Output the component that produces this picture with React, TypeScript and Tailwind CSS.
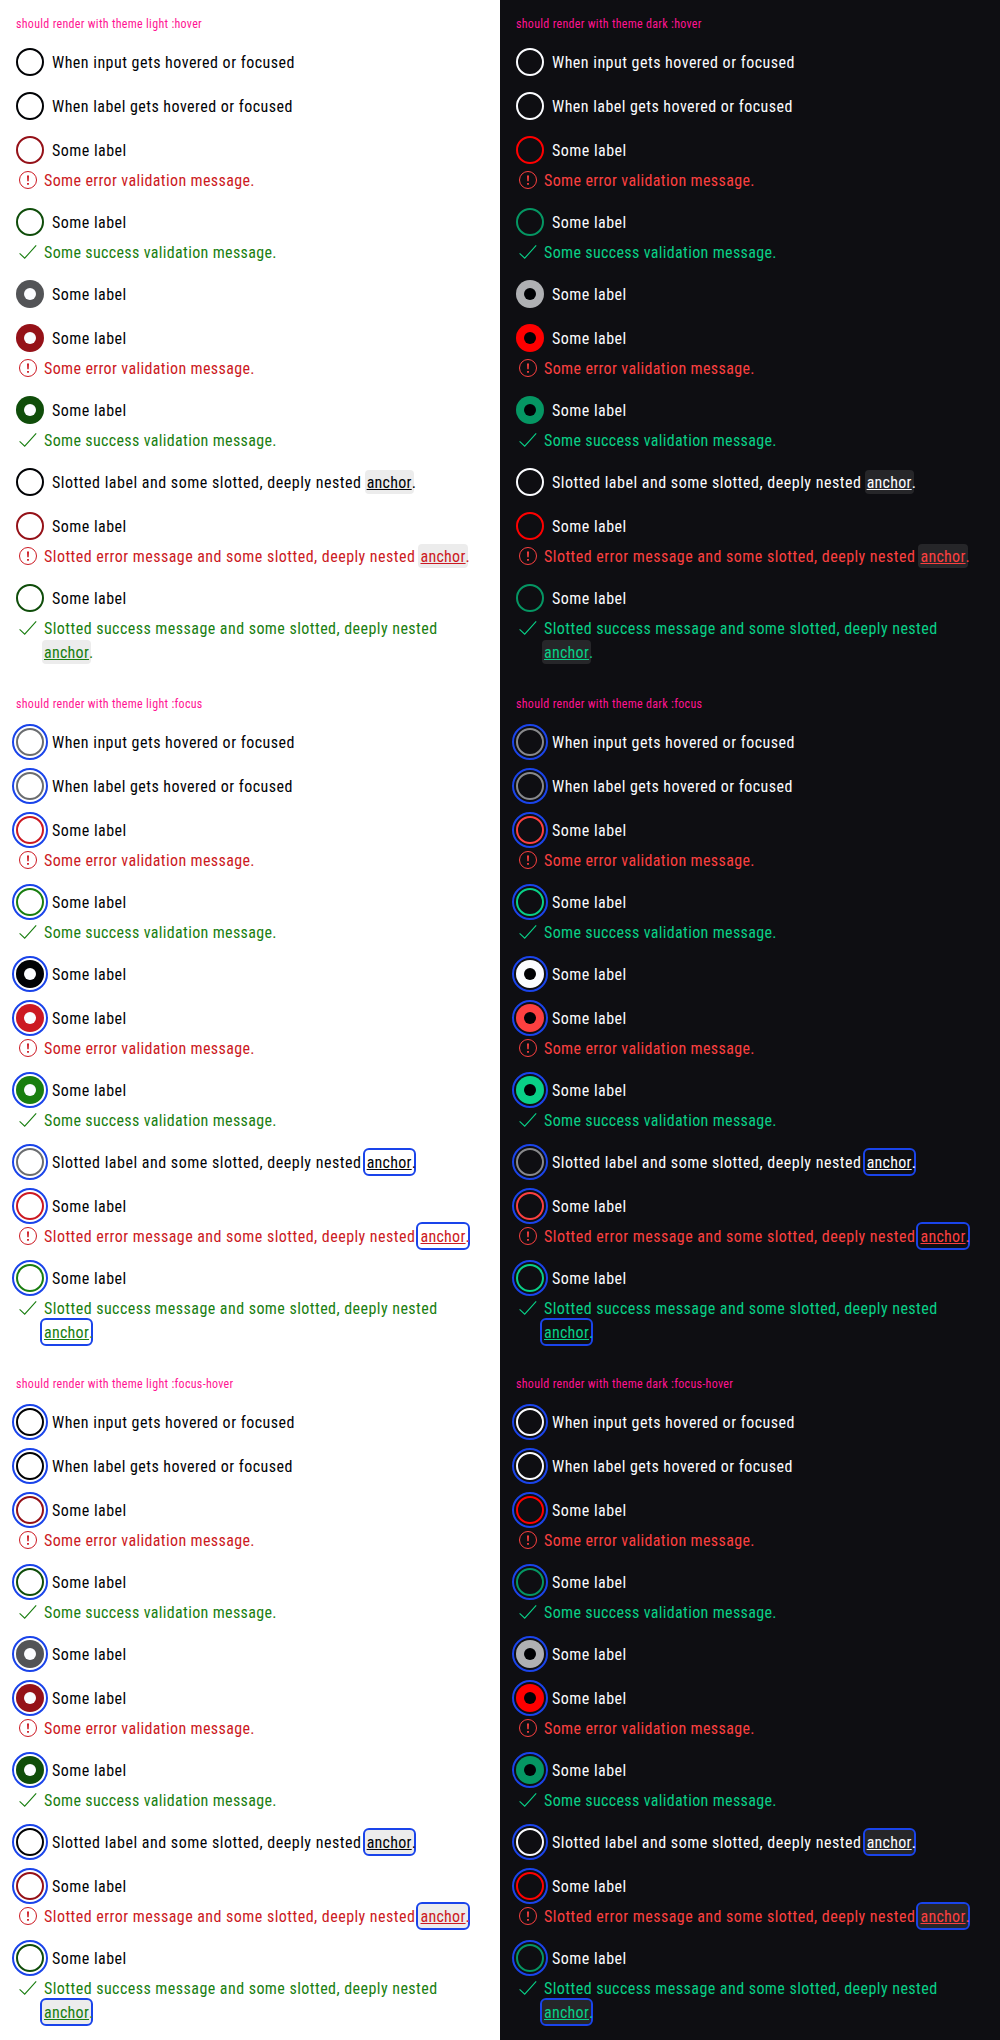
import React from 'react';

type Theme = 'light' | 'dark';
type Mode = 'hover' | 'focus' | 'focus-hover';
type State = 'none' | 'error' | 'success';

const FONT = "font-['Roboto',sans-serif] [font-stretch:85%]";

const palette = {
  light: {
    page: 'bg-white',
    text: 'text-[#010205]',
    dot: 'bg-[#fbfcff]',
    message: { none: '', error: 'text-[#cc1922]', success: 'text-[#197e10]' },
    border: {
      base: { none: 'border-[#6b6d70]', error: 'border-[#cc1922]', success: 'border-[#197e10]' },
      hover: { none: 'border-[#010205]', error: 'border-[#951118]', success: 'border-[#0f4d0a]' },
    },
    fill: {
      base: { none: 'bg-[#010205]', error: 'bg-[#cc1922]', success: 'bg-[#197e10]' },
      hover: { none: 'bg-[#535457]', error: 'bg-[#951118]', success: 'bg-[#0f4d0a]' },
    },
  },
  dark: {
    page: 'bg-[#0e0e12]',
    text: 'text-[#fbfcff]',
    dot: 'bg-[#010205]',
    message: { none: '', error: 'text-[#fc4040]', success: 'text-[#09d087]' },
    border: {
      base: { none: 'border-[#88898c]', error: 'border-[#fc4040]', success: 'border-[#09d087]' },
      hover: { none: 'border-[#fbfcff]', error: 'border-[#ff0000]', success: 'border-[#059663]' },
    },
    fill: {
      base: { none: 'bg-[#fbfcff]', error: 'bg-[#fc4040]', success: 'bg-[#09d087]' },
      hover: { none: 'bg-[#afb0b3]', error: 'bg-[#ff0000]', success: 'bg-[#059663]' },
    },
  },
};

function StateIcon({ state }: { state: State }) {
  return (
    <svg width="24" height="24" viewBox="0 0 24 24" fill="none" className="shrink-0">
      {state === 'error' ? (
        <>
          <circle cx="12" cy="12" r="8.5" stroke="currentColor" />
          <path d="M11 7.5h2l-.3 5.8h-1.4zM11.1 15h1.8v1.8h-1.8z" fill="currentColor" />
        </>
      ) : (
        <path d="M3.6 13.4 8.7 18.2 20.2 5.4" stroke="currentColor" strokeWidth="1.1" />
      )}
    </svg>
  );
}

function Anchor({ mode }: { mode: Mode }) {
  const hovered = mode !== 'focus' ? 'bg-[#949598]/[.18]' : '';
  const focused = mode !== 'hover' ? 'outline-2 outline-solid outline-[#1a44ea]' : '';
  return (
    <>
      <a
        className={`ml-[-1px] mr-[-2px] inline-block h-6 rounded-[4px] px-[2px] align-top tracking-[0.27px] underline decoration-1 underline-offset-1 ${hovered} ${focused}`}
      >
        anchor
      </a>
      .
    </>
  );
}

interface RadioProps {
  theme: Theme;
  mode: Mode;
  state?: State;
  checked?: boolean;
  label?: React.ReactNode;
  message?: React.ReactNode;
}

function Radio({ theme, mode, state = 'none', checked, label, message }: RadioProps) {
  const p = palette[theme];
  const kind = mode === 'focus' ? 'base' : 'hover';
  const ring = mode === 'hover' ? '' : 'outline-2 outline-offset-2 outline-solid outline-[#1a44ea]';
  return (
    <div className="flex flex-col gap-1">
      <div className="flex h-7 gap-2">
        <span
          className={`flex size-7 shrink-0 items-center justify-center rounded-full ${ring} ${
            checked ? p.fill[kind][state] : `border-2 ${p.border[kind][state]}`
          }`}
        >
          {checked && <span className={`size-3 rounded-full ${p.dot}`} />}
        </span>
        <span className="pt-0.5">{label ?? <span className="tracking-[0.47px]">Some label</span>}</span>
      </div>
      {message && (
        <div className={`flex gap-1 ${p.message[state]}`}>
          <StateIcon state={state} />
          <span>{message}</span>
        </div>
      )}
    </div>
  );
}

function Section({ theme, mode }: { theme: Theme; mode: Mode }) {
  const p = palette[theme];
  const common = { theme, mode };
  const error = <span className="block h-6 tracking-[0.37px]">Some error validation message.</span>;
  const success = <span className="block h-6 tracking-[0.35px]">Some success validation message.</span>;
  return (
    <section className={`h-[680px] p-4 ${p.page} ${p.text}`}>
      <p className="mb-4 h-4 text-xs leading-4 tracking-[0.3px] text-[#ff1493]">
        should render with theme {theme} :{mode}
      </p>
      <div className="flex flex-col gap-4">
        <Radio {...common} label={<span className="tracking-[0.48px]">When input gets hovered or focused</span>} />
        <Radio {...common} label={<span className="tracking-[0.46px]">When label gets hovered or focused</span>} />
        <Radio {...common} state="error" message={error} />
        <Radio {...common} state="success" message={success} />
        <Radio {...common} checked />
        <Radio {...common} checked state="error" message={error} />
        <Radio {...common} checked state="success" message={success} />
        <Radio
          {...common}
          label={
            <span className="tracking-[0.51px]">
              Slotted label and some slotted, deeply nested <Anchor mode={mode} />
            </span>
          }
        />
        <Radio
          {...common}
          state="error"
          message={
            <span className="block h-6 tracking-[0.46px]">
              Slotted error message and some slotted, deeply nested <Anchor mode={mode} />
            </span>
          }
        />
        <Radio
          {...common}
          state="success"
          message={
            <span className="block tracking-[0.45px]">
              <span className="block h-6">Slotted success message and some slotted, deeply nested</span>
              <span className="-ml-px block h-6">
                <Anchor mode={mode} />
              </span>
            </span>
          }
        />
      </div>
    </section>
  );
}

const modes: Mode[] = ['hover', 'focus', 'focus-hover'];
const themes: Theme[] = ['light', 'dark'];

export default function App() {
  return (
    <main className={`grid w-[1000px] grid-cols-2 text-base leading-[26px] ${FONT}`}>
      {modes.map((mode) =>
        themes.map((theme) => <Section key={theme + mode} theme={theme} mode={mode} />),
      )}
    </main>
  );
}
